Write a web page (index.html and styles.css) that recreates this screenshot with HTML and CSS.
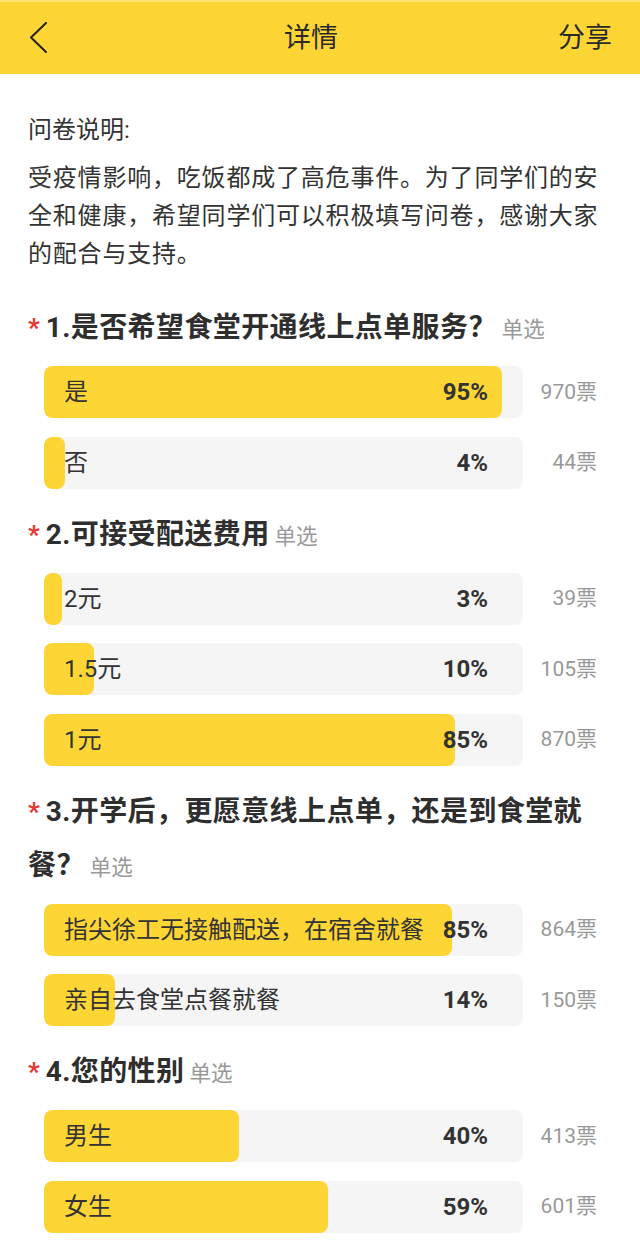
FILE: index.html
```html
<!DOCTYPE html>
<html lang="zh-CN">
<head>
<meta charset="utf-8">
<title>详情</title>
<link rel="stylesheet" href="styles.css">
</head>
<body>
<header class="topbar">
  <div class="back">
    <svg width="20" height="32" viewBox="0 0 20 32"><polyline points="17,1 2,15.5 17,30" fill="none" stroke="#222" stroke-width="2" stroke-linecap="round" stroke-linejoin="round"/></svg>
  </div>
  <div class="title">详情</div>
  <div class="share">分享</div>
</header>

<main class="content">
  <section class="intro">
    <div class="intro-label">问卷说明:</div>
    <p class="intro-text">受疫情影响，吃饭都成了高危事件。为了同学们的安全和健康，希望同学们可以积极填写问卷，感谢大家的配合与支持。</p>
  </section>

  <section class="question">
    <h2 class="q-title"><span class="star">*</span>1.是否希望食堂开通线上点单服务？<span class="q-type">单选</span></h2>
    <div class="options">
      <div class="option"><div class="track"><div class="fill" style="width:95.66%"></div><span class="label">是</span><span class="pct">95%</span></div><span class="votes">970票</span></div>
      <div class="option"><div class="track"><div class="fill" style="width:4.34%"></div><span class="label">否</span><span class="pct">4%</span></div><span class="votes">44票</span></div>
    </div>
  </section>

  <section class="question">
    <h2 class="q-title"><span class="star">*</span>2.可接受配送费用<span class="q-type">单选</span></h2>
    <div class="options">
      <div class="option"><div class="track"><div class="fill" style="width:3.85%"></div><span class="label">2元</span><span class="pct">3%</span></div><span class="votes">39票</span></div>
      <div class="option"><div class="track"><div class="fill" style="width:10.36%"></div><span class="label">1.5元</span><span class="pct">10%</span></div><span class="votes">105票</span></div>
      <div class="option"><div class="track"><div class="fill" style="width:85.8%"></div><span class="label">1元</span><span class="pct">85%</span></div><span class="votes">870票</span></div>
    </div>
  </section>

  <section class="question">
    <h2 class="q-title"><span class="star">*</span>3.开学后，更愿意线上点单，还是到食堂就餐？<span class="q-type">单选</span></h2>
    <div class="options">
      <div class="option"><div class="track"><div class="fill" style="width:85.21%"></div><span class="label">指尖徐工无接触配送，在宿舍就餐</span><span class="pct">85%</span></div><span class="votes">864票</span></div>
      <div class="option"><div class="track"><div class="fill" style="width:14.79%"></div><span class="label">亲自去食堂点餐就餐</span><span class="pct">14%</span></div><span class="votes">150票</span></div>
    </div>
  </section>

  <section class="question">
    <h2 class="q-title"><span class="star">*</span>4.您的性别<span class="q-type">单选</span></h2>
    <div class="options">
      <div class="option"><div class="track"><div class="fill" style="width:40.73%"></div><span class="label">男生</span><span class="pct">40%</span></div><span class="votes">413票</span></div>
      <div class="option"><div class="track"><div class="fill" style="width:59.27%"></div><span class="label">女生</span><span class="pct">59%</span></div><span class="votes">601票</span></div>
    </div>
  </section>
</main>
</body>
</html>
```

FILE: styles.css
```css
* { box-sizing: border-box; }
html, body { margin: 0; padding: 0; }
body {
  width: 640px;
  background: #ffffff;
  font-family: Roboto, "Noto Sans CJK SC", "Noto Sans", sans-serif;
  color: #333333;
}

.topbar {
  height: 74px;
  background: #fdd635;
  border-top: 2px solid #fde37a;
  display: grid;
  grid-template-columns: 1fr auto 1fr;
  align-items: center;
  padding: 0 28px 0 28px;
}
.back { display: flex; align-items: center; padding-left: 1px; }
.back svg { display: block; }
.title {
  font-size: 27px;
  color: #2a2a2a;
  margin-right: 18px;
  line-height: 1;
}
.share {
  justify-self: end;
  font-size: 27px;
  color: #2a2a2a;
  line-height: 1;
}

.content { padding: 0 28px 0 28px; }

.intro { padding-top: 37px; }
.intro-label {
  font-size: 24px;
  line-height: 38px;
  color: #333;
}
.intro-text {
  margin: 10px 0 0 0;
  font-size: 24px;
  line-height: 38px;
  letter-spacing: 0.8px;
  color: #333;
}

.question { margin-top: 28px; }
.question + .question { margin-top: 19px; }
.q-title {
  margin: 0;
  font-size: 28px;
  font-weight: 700;
  line-height: 54px;
  letter-spacing: 0.4px;
  color: #2e2e2e;
  padding-right: 28px;
}
.star {
  color: #e53935;
  font-size: 26px;
  font-weight: 700;
  line-height: 1;
  margin-right: 6px;
  letter-spacing: 0;
}
.q-type {
  font-size: 21.5px;
  font-weight: 400;
  line-height: 1;
  letter-spacing: 0;
  color: #999;
  margin-left: 5px;
}

.options {
  margin-top: 11px;
  padding-left: 16px;
  padding-right: 15px;
  display: flex;
  flex-direction: column;
  gap: 18.6px;
}
.option {
  display: flex;
  align-items: center;
}
.track {
  position: relative;
  width: 479px;
  height: 52px;
  border-radius: 8px;
  background: #f5f5f5;
  overflow: hidden;
  display: flex;
  align-items: center;
  justify-content: space-between;
  padding: 0 35px 0 20px;
  flex: none;
}
.fill {
  position: absolute;
  left: 0;
  top: 0;
  bottom: 0;
  background: #fdd635;
  border-radius: 8px;
}
.label {
  position: relative;
  font-size: 24px;
  line-height: 1;
  color: #333;
  white-space: nowrap;
}
.pct {
  position: relative;
  font-size: 24px;
  line-height: 1;
  font-weight: 700;
  color: #333;
}
.votes {
  flex: 1;
  text-align: right;
  font-size: 21px;
  line-height: 1;
  color: #999;
}
```
